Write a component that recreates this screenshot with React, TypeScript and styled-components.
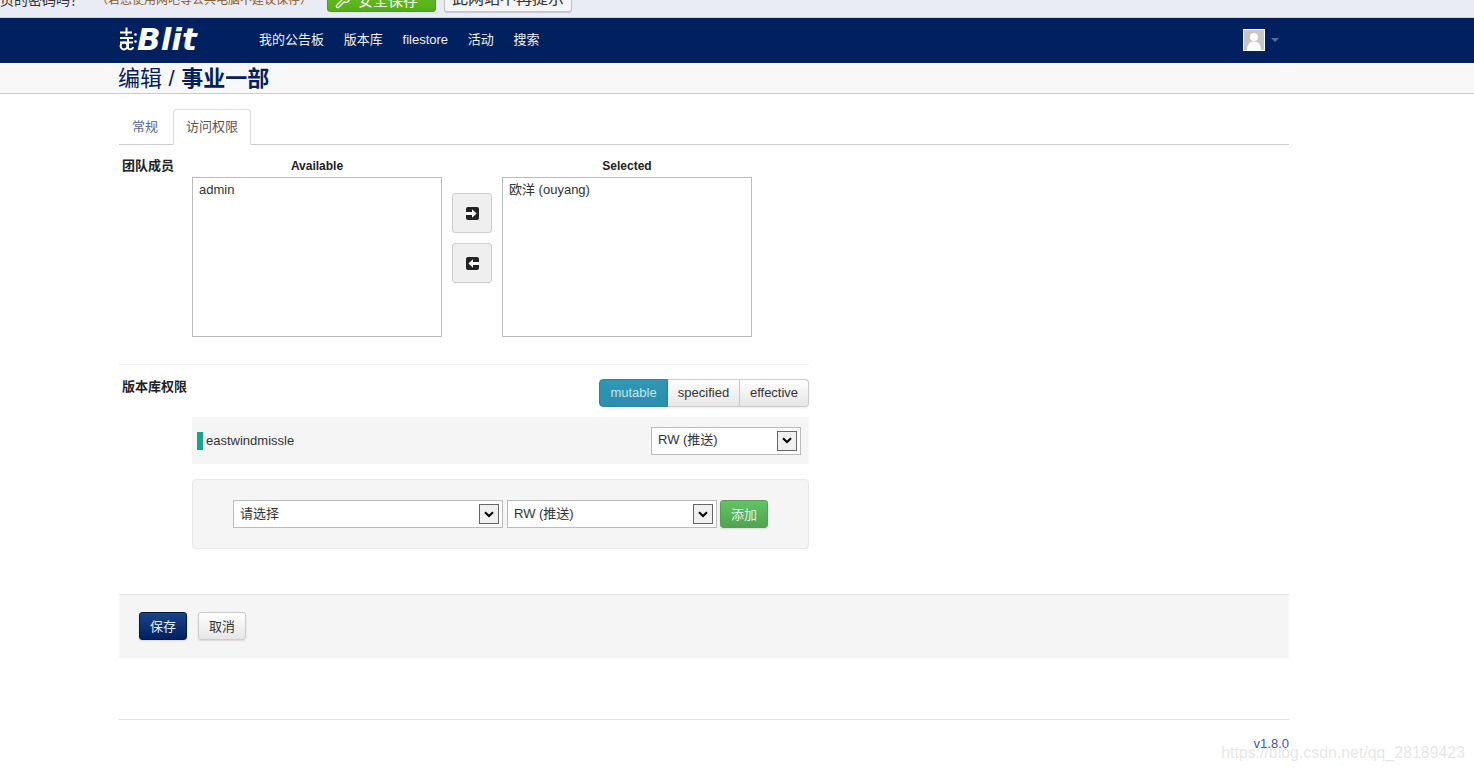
import React from 'react';
import styled, { createGlobalStyle } from 'styled-components';
import { Wrench } from 'lucide-react';

const Global = createGlobalStyle`
  html, body { margin: 0; padding: 0; height: 770px; overflow: hidden; background: #fff; }
  body { font: 13px/18px "Liberation Sans", "Noto Sans CJK SC", sans-serif; color: #333; }
  * { box-sizing: border-box; }
`;

const Page = styled.div`
  position: relative;
  width: 1474px;
  height: 770px;
  overflow: hidden;
`;

const BrowserBar = styled.div`
  height: 18px;
  background: #e9ecf4;
  border-bottom: 1px solid #c6cfe0;
  display: flex;
  align-items: flex-end;
  overflow: hidden;
`;
const BarQuestion = styled.span`
  flex: none;
  width: 96px;
  font-size: 14px;
  line-height: 20px;
  color: #333;
  margin-bottom: 7px;
  white-space: nowrap;
`;
const BarHint = styled.span`
  flex: none;
  width: 231px;
  font-size: 12px;
  line-height: 18px;
  color: #8a5a2a;
  margin-bottom: 8px;
  white-space: nowrap;
`;
const BarSave = styled.div`
  flex: none;
  width: 109px;
  height: 30px;
  margin-bottom: 5px;
  border-radius: 3px;
  background: linear-gradient(#6ecb24, #55ad16);
  border: 1px solid #4f9e14;
  color: #fff;
  font-size: 15px;
  padding: 8px 0 0 7px;
  display: flex;
  align-items: center;
  gap: 7px;
`;
const BarDismiss = styled.div`
  flex: none;
  width: 128px;
  height: 30px;
  margin: 0 0 5px 8px;
  border-radius: 3px;
  background: #f5f5f5;
  border: 1px solid #c4c4c4;
  box-shadow: 0 1px 1px rgba(0, 0, 0, 0.15);
  color: #333;
  font-size: 16px;
  padding-top: 7px;
  text-align: center;
`;

const Navbar = styled.header`
  height: 45px;
  background: #00205f;
`;
const Container = styled.div`
  width: 1170px;
  margin-left: 119px;
`;
const NavInner = styled(Container)`
  height: 45px;
  display: flex;
  align-items: center;
`;
const Brand = styled.div`
  width: 140px;
  display: flex;
  align-items: center;
  color: #fff;
  font-family: "DejaVu Sans", sans-serif;
  font-size: 31px;
  font-weight: bold;
  font-style: italic;
  line-height: 40px;
  padding-bottom: 3px;
`;
const NavLinks = styled.nav`
  display: flex;
  gap: 19.75px;
  flex: 1;
  color: #f0f0f0;
  font-size: 13px;
  padding-bottom: 2px;
`;
const UserMenu = styled.div`
  display: flex;
  align-items: center;
  gap: 6px;
  margin: 0 10px 2px 0;
`;
const Avatar = styled.div`
  width: 22px;
  height: 22px;
  border: 1px solid #fff;
  background: #c6c6c6;
  display: flex;
`;
const Caret = styled.span`
  width: 0;
  height: 0;
  border: 4px solid transparent;
  border-top-color: #5a6b98;
  border-bottom: 0;
`;

const SubHeader = styled.div`
  height: 31px;
  background: #f8f8f8;
  border-bottom: 1px solid #ccc;
`;
const Title = styled.h1`
  margin: 0 0 0 -1px;
  font-size: 22px;
  line-height: 31px;
  font-weight: normal;
  word-spacing: 0.5px;
  color: #002060;
  white-space: pre;
`;
const TitleStrong = styled.b`
  font-weight: bold;
`;

const Tabs = styled.div`
  display: flex;
  margin-top: 15px;
  height: 36px;
  border-bottom: 1px solid #ccc;
`;
const Tab = styled.div<{ $active?: boolean }>`
  height: 36px;
  padding: 8px 12px;
  margin-right: 2px;
  border: 1px solid ${p => (p.$active ? '#ddd' : 'transparent')};
  border-bottom-color: ${p => (p.$active ? '#fff' : 'transparent')};
  border-radius: 4px 4px 0 0;
  background: ${p => (p.$active ? '#fff' : 'transparent')};
  color: ${p => (p.$active ? '#555' : '#556699')};
`;

const FormRow = styled.div`
  display: flex;
  width: 690px;
`;
const FieldLabel = styled.label<{ $raised?: boolean }>`
  flex: none;
  width: 73px;
  padding-left: 3px;
  margin-top: ${p => (p.$raised ? -1 : 0)}px;
  font-weight: bold;
  color: #222;
`;
const Palette = styled.div`
  display: flex;
  margin-top: 12px;
`;
const PaletteColumn = styled.div`
  width: 250px;
  display: flex;
  flex-direction: column;
`;
const PaletteHead = styled.div`
  height: 20px;
  font-size: 12px;
  font-weight: bold;
  line-height: 18px;
  text-align: center;
  color: #222;
`;
const ListBox = styled.div`
  height: 160px;
  border: 1px solid #bbb;
  padding: 3px 6px;
  background: #fff;
`;
const MoveButtons = styled.div`
  width: 60px;
  padding: 36px 10px 0;
  display: flex;
  flex-direction: column;
  gap: 10px;
`;
const MoveButton = styled.div`
  width: 40px;
  height: 40px;
  border: 1px solid #ccc;
  border-radius: 3px;
  background: #efefef;
  display: flex;
  align-items: center;
  justify-content: center;
`;
const Divider = styled.hr`
  width: 690px;
  margin: 27px 0 14px;
  border: 0;
  border-top: 1px solid #eee;
`;
const PermissionsColumn = styled.div`
  flex: none;
  width: 617px;
`;
const ModeBar = styled.div`
  display: flex;
  justify-content: flex-end;
  height: 38px;
`;
const ModeButton = styled.div<{ $active?: boolean; $w: number; $pos: 'start' | 'mid' | 'end' }>`
  width: ${p => p.$w}px;
  height: 28px;
  line-height: 26px;
  text-align: center;
  border: 1px solid ${p => (p.$active ? '#2a85a0' : '#ccc')};
  border-left-width: ${p => (p.$pos === 'start' ? 1 : 0)}px;
  border-radius: ${p => (p.$pos === 'start' ? '4px 0 0 4px' : p.$pos === 'end' ? '0 4px 4px 0' : '0')};
  background: ${p => (p.$active ? 'linear-gradient(#2f96b4, #2a8fae)' : 'linear-gradient(#fff, #e6e6e6)')};
  color: ${p => (p.$active ? '#c9e3ec' : '#333')};
  box-shadow: 0 1px 2px rgba(0, 0, 0, 0.08);
`;
const RepoRow = styled.div`
  height: 47px;
  background: #f5f5f5;
  display: flex;
  align-items: center;
  padding: 0 8px 0 5px;
`;
const RepoMark = styled.span`
  width: 6px;
  height: 18px;
  background: #14a58a;
  margin-right: 3px;
`;
const RepoName = styled.span`
  flex: 1;
`;
const AddWell = styled.div`
  margin-top: 15px;
  height: 70px;
  background: #f5f5f5;
  border: 1px solid #e8e8e8;
  border-radius: 4px;
  display: flex;
  align-items: center;
  padding-left: 40px;
  gap: 4px;
`;
const SelectWrap = styled.div<{ $w: number }>`
  position: relative;
  width: ${p => p.$w}px;
  height: 28px;
  flex: none;
`;
const NativeSelect = styled.select`
  appearance: none;
  width: 100%;
  height: 100%;
  border: 1px solid #bbb;
  border-radius: 0;
  background: #fff;
  color: #333;
  font: 13px "Liberation Sans", "Noto Sans CJK SC", sans-serif;
  padding: 0 6px 2px;
`;
const SelectArrow = styled.span`
  position: absolute;
  right: 4px;
  top: 4px;
  width: 20px;
  height: 20px;
  border: 1px solid #666;
  background: #f0f0f0;
  display: flex;
  align-items: center;
  justify-content: center;
  pointer-events: none;
`;
const AddButton = styled.button`
  width: 48px;
  height: 28px;
  margin-left: -1px;
  border: 1px solid #51a351;
  border-radius: 3px;
  background: linear-gradient(#62c462, #51a351);
  color: #e6f5e6;
  font: 13px "Liberation Sans", "Noto Sans CJK SC", sans-serif;
  padding: 0 0 1px;
  box-shadow: 0 1px 2px rgba(0, 0, 0, 0.1);
`;
const FormActions = styled.div`
  margin-top: 45px;
  height: 64px;
  background: #f5f5f5;
  border-top: 1px solid #e5e5e5;
  display: flex;
  align-items: center;
  padding: 0 0 2px 20px;
  gap: 11px;
`;
const ActionButton = styled.button<{ $primary?: boolean }>`
  width: 48px;
  height: 28px;
  border: 1px solid ${p => (p.$primary ? '#001a50' : '#ccc')};
  border-radius: 3px;
  background: ${p => (p.$primary ? 'linear-gradient(#1c4388, #002060)' : 'linear-gradient(#fff, #e6e6e6)')};
  color: ${p => (p.$primary ? '#e8eef8' : '#333')};
  font: 13px "Liberation Sans", "Noto Sans CJK SC", sans-serif;
  padding: 0;
  box-shadow: 0 1px 2px rgba(0, 0, 0, 0.12);
`;
const Footer = styled.footer`
  margin-top: 61px;
  border-top: 1px solid #e5e5e5;
  padding-top: 15px;
  text-align: right;
  color: #3f55b0;
  font-size: 13px;
  line-height: 18px;
`;
const Watermark = styled.div`
  position: absolute;
  right: 9px;
  top: 743px;
  font-size: 15.9px;
  line-height: 20px;
  color: rgba(150, 150, 150, 0.25);
  white-space: nowrap;
`;

const ArrowIcon = ({ dir }: { dir: 'left' | 'right' }) => (
  <svg width="13" height="13" viewBox="0 0 13 13" style={{ transform: dir === 'left' ? 'scaleX(-1)' : undefined }}>
    <rect x="0" y="0" width="13" height="13" rx="2" fill="#222" />
    <path d="M0 5H6V2.3L10.6 6.5L6 10.7V8H0Z" fill="#fff" />
  </svg>
);

const Chevron = () => (
  <svg width="10" height="7" viewBox="0 0 10 7">
    <path d="M1 1.2L5 5L9 1.2" fill="none" stroke="#000" strokeWidth="2" />
  </svg>
);

const GitMark = () => (
  <svg width="18" height="24" viewBox="0 0 18 24" fill="none" stroke="#fff" strokeWidth="2">
    <path d="M7.5 0.5V9" />
    <path d="M1 5.5H13" />
    <path d="M1 11H14" />
    <path d="M1 15.5H14" />
    <path d="M9 11V22" />
    <circle cx="5" cy="19" r="3.4" />
    <path d="M9 21.5C11 23 14 22.5 14 20" />
    <circle cx="16.5" cy="7.5" r="1.3" fill="#fff" stroke="none" />
    <circle cx="16.5" cy="14.5" r="1.3" fill="#fff" stroke="none" />
  </svg>
);

const AvatarMark = () => (
  <svg width="20" height="20" viewBox="0 0 20 20">
    <circle cx="10" cy="7" r="4" fill="#fff" />
    <path d="M3 20C3 14 6 11.5 10 11.5C14 11.5 17 14 17 20Z" fill="#fff" />
  </svg>
);

const SelectBox = ({ w, value, options }: { w: number; value: string; options: string[] }) => (
  <SelectWrap $w={w}>
    <NativeSelect defaultValue={value}>
      {options.map(o => (
        <option key={o}>{o}</option>
      ))}
    </NativeSelect>
    <SelectArrow>
      <Chevron />
    </SelectArrow>
  </SelectWrap>
);

export default function App() {
  return (
    <Page>
      <Global />
      <BrowserBar>
        <BarQuestion>页的密码吗？</BarQuestion>
        <BarHint>（若您使用网吧等公共电脑不建议保存）</BarHint>
        <BarSave>
          <Wrench size={16} color="#fff" />
          安全保存
        </BarSave>
        <BarDismiss>此网站不再提示</BarDismiss>
      </BrowserBar>
      <Navbar>
        <NavInner>
          <Brand>
            <GitMark />
            Blit
          </Brand>
          <NavLinks>
            <span>我的公告板</span>
            <span>版本库</span>
            <span>filestore</span>
            <span>活动</span>
            <span>搜索</span>
          </NavLinks>
          <UserMenu>
            <Avatar>
              <AvatarMark />
            </Avatar>
            <Caret />
          </UserMenu>
        </NavInner>
      </Navbar>
      <SubHeader>
        <Container>
          <Title>
            编辑 / <TitleStrong>事业一部</TitleStrong>
          </Title>
        </Container>
      </SubHeader>
      <Container>
        <Tabs>
          <Tab>常规</Tab>
          <Tab $active>访问权限</Tab>
        </Tabs>
        <Palette>
          <FieldLabel>团队成员</FieldLabel>
          <PaletteColumn>
            <PaletteHead>Available</PaletteHead>
            <ListBox>admin</ListBox>
          </PaletteColumn>
          <MoveButtons>
            <MoveButton>
              <ArrowIcon dir="right" />
            </MoveButton>
            <MoveButton>
              <ArrowIcon dir="left" />
            </MoveButton>
          </MoveButtons>
          <PaletteColumn>
            <PaletteHead>Selected</PaletteHead>
            <ListBox>欧洋 (ouyang)</ListBox>
          </PaletteColumn>
        </Palette>
        <Divider />
        <FormRow>
          <FieldLabel $raised>版本库权限</FieldLabel>
          <PermissionsColumn>
            <ModeBar>
              <ModeButton $active $w={69} $pos="start">mutable</ModeButton>
              <ModeButton $w={72} $pos="mid">specified</ModeButton>
              <ModeButton $w={69} $pos="end">effective</ModeButton>
            </ModeBar>
            <RepoRow>
              <RepoMark />
              <RepoName>eastwindmissle</RepoName>
              <SelectBox w={150} value="RW (推送)" options={['RW (推送)']} />
            </RepoRow>
            <AddWell>
              <SelectBox w={270} value="请选择" options={['请选择']} />
              <SelectBox w={210} value="RW (推送)" options={['RW (推送)']} />
              <AddButton>添加</AddButton>
            </AddWell>
          </PermissionsColumn>
        </FormRow>
        <FormActions>
          <ActionButton $primary>保存</ActionButton>
          <ActionButton>取消</ActionButton>
        </FormActions>
        <Footer>v1.8.0</Footer>
      </Container>
      <Watermark>https://blog.csdn.net/qq_28189423</Watermark>
    </Page>
  );
}
